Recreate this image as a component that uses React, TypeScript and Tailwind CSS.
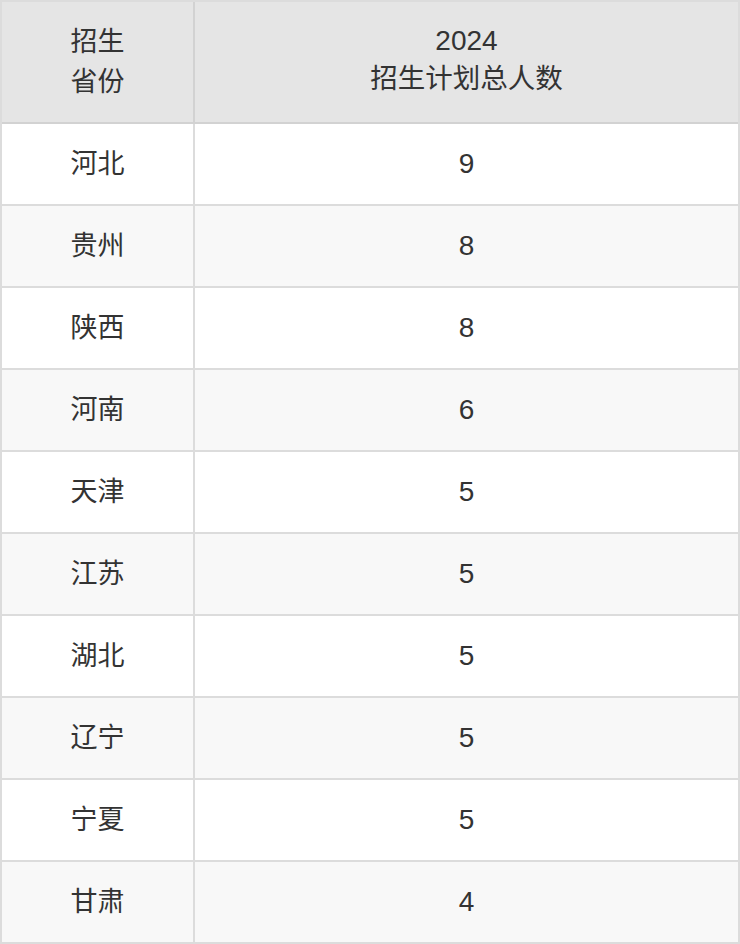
const rows: [string, number][] = [
  ["河北", 9],
  ["贵州", 8],
  ["陕西", 8],
  ["河南", 6],
  ["天津", 5],
  ["江苏", 5],
  ["湖北", 5],
  ["辽宁", 5],
  ["宁夏", 5],
  ["甘肃", 4],
];

const App = () => {
  return (
    <div
      className="w-[740px] border-2 border-[#dcdcdc] text-[#333333] text-[27px]"
      style={{ fontFamily: '"Liberation Sans", "Noto Sans CJK SC", sans-serif' }}
    >
      <div className="flex h-[122px] bg-[#e5e5e5] border-b-2 border-[#d2d2d2]">
        <div className="w-[193px] border-r-2 border-[#d2d2d2] flex flex-col items-center justify-center leading-[40px]">
          <div>招生</div>
          <div>省份</div>
        </div>
        <div className="flex-1 flex flex-col items-center justify-center leading-[38px] pb-[5px]">
          <div className="text-[28px]">2024</div>
          <div className="text-[27.5px]">招生计划总人数</div>
        </div>
      </div>
      {rows.map(([name, count], i) => (
        <div
          key={name}
          className={`flex ${i === rows.length - 1 ? "h-[80px]" : "h-[82px] border-b-2"} border-[#dcdcdc] ${
            i % 2 === 1 ? "bg-[#f8f8f8]" : "bg-white"
          }`}
        >
          <div className="w-[193px] border-r-2 border-[#dcdcdc] flex items-center justify-center">
            {name}
          </div>
          <div className="flex-1 flex items-center justify-center text-[28px]">{count}</div>
        </div>
      ))}
    </div>
  );
};

export default App;
